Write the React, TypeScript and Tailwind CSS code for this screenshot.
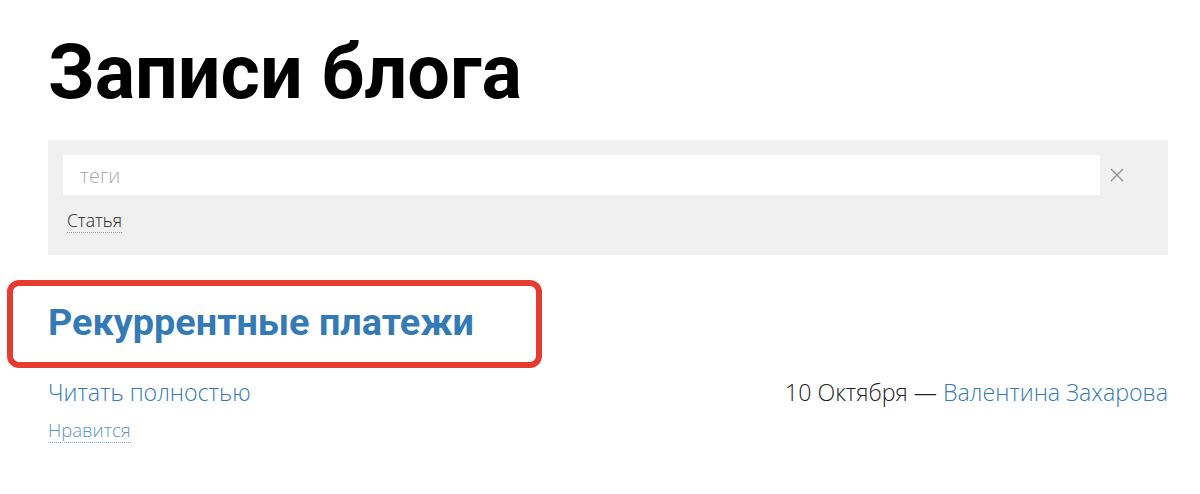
import React from "react";

export default function App() {
  return (
    <div className="min-h-screen bg-white pl-12 pr-8 pt-7 font-['Open_Sans',sans-serif]">
      {/* Header */}
      <h1 className="font-['Roboto',sans-serif] text-[75.5px] font-bold leading-[88px] text-black">
        Записи блога
      </h1>

      {/* Tag filter */}
      <div className="mt-6 bg-[#f0f0f0] px-[15px] pt-[15px] pb-[22px]">
        <div className="flex items-center">
          <input
            placeholder="теги"
            className="h-10 flex-1 bg-white px-[17px] text-[20px] font-light text-[#333] outline-none placeholder:text-[#ababab]"
          />
          <button className="flex w-[33px] items-center justify-center text-[#8f8f8f]">
            <svg width="14" height="14" viewBox="0 0 14 14" fill="none" stroke="currentColor" strokeWidth="1.3">
              <path d="M1 1L13 13M13 1L1 13" />
            </svg>
          </button>
          <div className="w-5" />
        </div>
        <div className="mt-[14px] pl-1">
          <span className="border-b border-dotted border-[#9a9a9a] text-[17.5px] font-light leading-[23px] text-[#222]">
            Статья
          </span>
        </div>
      </div>

      {/* Post */}
      <div className="mt-[45px]">
        <div className="relative">
          <h2 className="font-['Roboto',sans-serif] text-[37.8px] font-bold leading-[44px] text-[#337ab7]">
            Рекуррентные платежи
          </h2>
          <div className="pointer-events-none absolute -left-[41px] -top-[20px] h-[88px] w-[535px] rounded-[12px] border-[6px] border-[#e53b30]" />
        </div>
        <div className="mt-[33px] flex items-center justify-between text-[23.2px] font-light leading-[30px]">
          <a className="text-[#337ab7]">Читать полностью</a>
          <div className="text-[#222]">
            10 Октября — <a className="text-[#337ab7]">Валентина Захарова</a>
          </div>
        </div>
        <div className="mt-[11px]">
          <span className="border-b border-dotted border-[#7fa9d6] text-[18.5px] font-light leading-[24px] text-[#5b93cc]">
            Нравится
          </span>
        </div>
      </div>
    </div>
  );
}
